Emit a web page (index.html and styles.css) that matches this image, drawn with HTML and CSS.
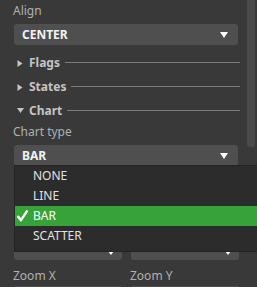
FILE: index.html
```html
<!DOCTYPE html>
<html>
<head>
<meta charset="utf-8">
<link rel="stylesheet" href="styles.css">
</head>
<body>
<div class="panel">
  <div class="content">
    <div class="label first">Align</div>
    <div class="dropdown"><span class="value">CENTER</span><svg class="arrow" width="8" height="6" viewBox="0 0 8 6"><polygon points="0,0 8,0 4,6" fill="#fff"/></svg></div>

    <div class="section s-first"><svg class="tri" width="6" height="7" viewBox="0 0 6 7"><polygon points="0,0 5,3.5 0,7" fill="#c4c4c4"/></svg><span class="title">Flags</span><span class="rule"></span></div>
    <div class="section"><svg class="tri" width="6" height="7" viewBox="0 0 6 7"><polygon points="0,0 5,3.5 0,7" fill="#c4c4c4"/></svg><span class="title">States</span><span class="rule"></span></div>
    <div class="section"><svg class="tri" width="7" height="6" viewBox="0 0 7 6"><polygon points="0,0 7,0 3.5,5" fill="#c4c4c4"/></svg><span class="title">Chart</span><span class="rule"></span></div>

    <div class="label">Chart type</div>
    <div class="dropdown"><span class="value">BAR</span><svg class="arrow" width="8" height="6" viewBox="0 0 8 6"><polygon points="0,0 8,0 4,6" fill="#fff"/></svg></div>

    <div class="pair hidden-row">
      <div class="field"><svg class="spin" width="6" height="10" viewBox="0 0 6 10"><polygon points="0,4 6,4 3,0" fill="#fff"/><polygon points="0,6 6,6 3,10" fill="#fff"/></svg></div>
      <div class="field"><svg class="spin" width="6" height="10" viewBox="0 0 6 10"><polygon points="0,4 6,4 3,0" fill="#fff"/><polygon points="0,6 6,6 3,10" fill="#fff"/></svg></div>
    </div>
    <div class="pair">
      <div class="label">Zoom X</div>
      <div class="label">Zoom Y</div>
    </div>
    <div class="pair">
      <div class="field short"></div>
      <div class="field short"></div>
    </div>
  </div>
  <div class="scrollbar"><div class="thumb"></div></div>

  <div class="popup">
    <div class="item">NONE</div>
    <div class="item">LINE</div>
    <div class="item selected"><svg class="check" width="11" height="12" viewBox="0 0 11 12"><polyline points="1.3,6.8 4,10.2 9.8,1.3" fill="none" stroke="#fff" stroke-width="2.4" stroke-linecap="round" stroke-linejoin="round"/></svg>BAR</div>
    <div class="item">SCATTER</div>
  </div>
</div>
</body>
</html>
```
FILE: styles.css
```css
html, body {
  margin: 0;
  padding: 0;
  background: #393939;
  overflow: hidden;
}
body {
  width: 257px;
  height: 287px;
  font-family: "Noto Sans", "Open Sans", sans-serif;
  font-size: 12px;
}
.panel {
  position: relative;
  display: flex;
  width: 257px;
  height: 287px;
  overflow: hidden;
}
.content {
  width: 226px;
  padding-left: 13px;
  display: flex;
  flex-direction: column;
}
.label {
  height: 20px;
  line-height: 20px;
  color: #b0b0b0;
  margin-bottom: 3px;
  white-space: nowrap;
}
.label.first {
  margin-top: 1px;
}
.dropdown {
  margin-left: 1px;
  width: 224px;
  height: 21px;
  box-sizing: border-box;
  background: #4f4f4f;
  border-radius: 3px;
  display: flex;
  align-items: center;
  justify-content: space-between;
  padding: 0 10px 0 8px;
}
.dropdown .value {
  color: #f2f2f2;
  font-weight: bold;
  font-size: 12px;
  line-height: 21px;
}
.section {
  height: 22px;
  line-height: 22px;
  margin-top: 2px;
  display: flex;
  align-items: center;
  padding-left: 4px;
}
.section.s-first {
  margin-top: 7px;
}
.section .tri {
  width: 7px;
  margin-right: 5px;
}
.section .title {
  color: #c4c4c4;
  font-weight: bold;
  font-size: 12px;
}
.section .rule {
  flex: 1;
  height: 1px;
  background: #7c7c7c;
  margin-left: 5px;
  margin-right: -1px;
  margin-top: -1px;
}
.pair {
  display: grid;
  grid-template-columns: 1fr 1fr;
  column-gap: 8px;
}
.hidden-row {
  margin-top: 73px;
  margin-bottom: 6px;
}
.pair .field {
  margin-left: 1px;
  height: 21px;
  background: #4f4f4f;
  border-radius: 3px;
  display: flex;
  align-items: center;
  justify-content: flex-end;
  padding-right: 8px;
}
.pair .field.short {
  height: 2px;
  border-radius: 3px 3px 0 0;
}
.pair .label {
  margin-bottom: 0;
}
.scrollbar {
  margin-left: 8px;
  width: 8px;
  height: 287px;
}
.thumb {
  width: 8px;
  height: 147px;
  background: #4a4a4a;
  border-radius: 0 0 3px 3px;
}
.popup {
  position: absolute;
  left: 14px;
  right: 0;
  top: 165px;
  height: 87px;
  box-sizing: border-box;
  background: #2c2c2c;
  border: 1px solid #242424;
  border-right: none;
}
.item {
  height: 20px;
  line-height: 20px;
  padding-left: 18px;
  color: #e2e2e2;
  position: relative;
}
.item.selected {
  background: #38a23a;
  color: #ffffff;
}
.check {
  position: absolute;
  left: 2px;
  top: 4px;
}
```
